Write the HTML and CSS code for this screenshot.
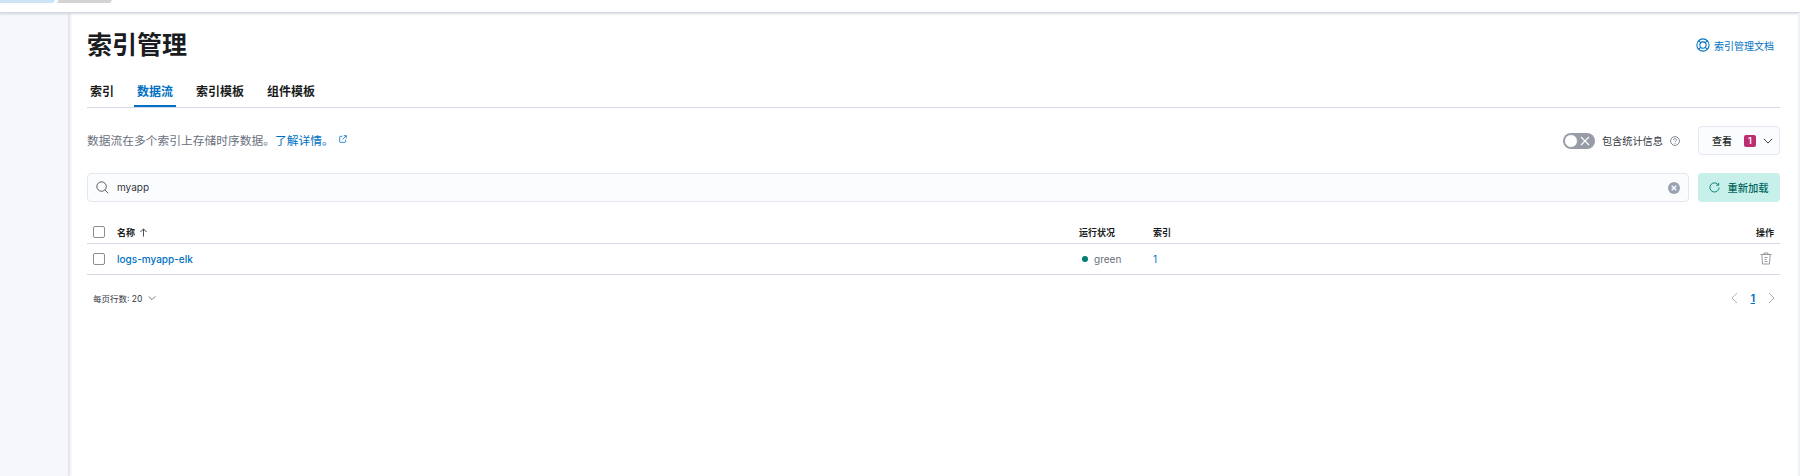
FILE: index.html
```html
<!DOCTYPE html>
<html lang="zh">
<head>
<meta charset="utf-8">
<title>索引管理</title>
<link rel="stylesheet" href="styles.css">
</head>
<body>
<div class="topbar">
  <div class="crumbs"><span class="crumb crumb-a"></span><span class="crumb crumb-b"></span></div>
</div>
<div class="shell">
  <aside class="side"></aside>
  <main class="panel">
    <header class="head">
      <h1>索引管理</h1>
      <a class="doc">
        <svg width="14" height="14" viewBox="0 0 16 16" fill="none" stroke="#0071c2" stroke-width="1.2"><circle cx="8" cy="8" r="7"/><circle cx="8" cy="8" r="3.6"/><path d="M3 3l2.4 2.4M13 3l-2.4 2.4M3 13l2.4-2.4M13 13l-2.4-2.4"/></svg>
        <span>索引管理文档</span>
      </a>
    </header>
    <nav class="tabs">
      <span class="tab">索引</span>
      <span class="tab active">数据流</span>
      <span class="tab">索引模板</span>
      <span class="tab">组件模板</span>
    </nav>
    <section class="intro">
      <p class="desc">数据流在多个索引上存储时序数据。<a class="link">了解详情。</a>
        <svg class="ext" width="8" height="8" viewBox="0 0 12 12" fill="none" stroke="#0071c2" stroke-width="1.2"><path d="M5 2H2a1 1 0 0 0-1 1v7a1 1 0 0 0 1 1h7a1 1 0 0 0 1-1V7M7 1h4v4M11 1L5.500 6.500"/></svg>
      </p>
      <div class="intro-right">
        <span class="switch"><span class="knob"></span>
          <svg width="10" height="10" viewBox="0 0 10 10" stroke="#fff" stroke-width="1.1"><path d="M1 1l8 8M9 1l-8 8"/></svg>
        </span>
        <span class="switch-label">包含统计信息</span>
        <svg class="help" width="10" height="10" viewBox="0 0 12 12" fill="none" stroke="#69707d"><circle cx="6" cy="6" r="5.300"/><path d="M4.300 4.700a1.700 1.700 0 1 1 2.500 1.500c-.6.300-.8.600-.8 1.200M6 8.500v1"/></svg>
        <button class="view"><span class="view-label">查看</span><span class="badge">1</span>
          <svg width="10" height="10" viewBox="0 0 12 12" fill="none" stroke="#1a1c21" stroke-width="1"><path d="M1 3.500l5 5 5-5"/></svg>
        </button>
      </div>
    </section>
    <section class="search-row">
      <div class="search">
        <svg width="13" height="13" viewBox="0 0 16 16" fill="none" stroke="#343741" stroke-width="1"><circle cx="6.800" cy="6.800" r="5.800"/><path d="M11 11l4 4"/></svg>
        <span class="query">myapp</span>
        <span class="clear"><svg width="6" height="6" viewBox="0 0 6 6" stroke="#fff" stroke-width="1.300"><path d="M.7.700l4.600 4.600M5.300.700L.7 5.300"/></svg></span>
      </div>
      <button class="reload">
        <svg width="11" height="11" viewBox="0 0 12 12" fill="none" stroke="#017d73" stroke-width="1"><path d="M10.300 3.400A5 5 0 1 0 11 6M10.500 1v2.600H8"/></svg>
        <span>重新加载</span>
      </button>
    </section>
    <table class="grid">
      <thead>
        <tr>
          <th class="c-check"><span class="box"></span></th>
          <th class="c-name"><span class="sort">名称
            <svg width="9" height="9" viewBox="0 0 10 10" fill="none" stroke="#343741"><path d="M5 9.500V1M1.500 4.500L5 1l3.500 3.500"/></svg></span></th>
          <th class="c-health">运行状况</th>
          <th class="c-index">索引</th>
          <th class="c-action">操作</th>
        </tr>
      </thead>
      <tbody>
        <tr>
          <td class="c-check"><span class="box"></span></td>
          <td class="c-name"><a class="link name">logs-myapp-elk</a></td>
          <td class="c-health"><span class="dot"></span><span class="status">green</span></td>
          <td class="c-index"><a class="link">1</a></td>
          <td class="c-action">
            <svg class="trash" width="12" height="13" viewBox="0 0 12 13" fill="none" stroke="#8c8f96" stroke-width=".9"><path d="M.5 2.500h11M4 2.500V1h4v1.500M1.800 2.500l.7 9.500h7l.7-9.500M4.500 5.500h3M4.500 7.500h2M4.500 9.500h3"/></svg>
          </td>
        </tr>
      </tbody>
    </table>
    <footer class="pager">
      <span class="rows">每页行数: 20
        <svg width="8" height="8" viewBox="0 0 12 12" fill="none" stroke="#343741"><path d="M1 3.500l5 5 5-5"/></svg>
      </span>
      <span class="pages">
        <svg width="7" height="12" viewBox="0 0 7 12" fill="none" stroke="#abb4c4"><path d="M6 1L1 6l5 5"/></svg>
        <a class="page-num">1</a>
        <svg width="7" height="12" viewBox="0 0 7 12" fill="none" stroke="#abb4c4"><path d="M1 1l5 5-5 5"/></svg>
      </span>
    </footer>
  </main>
</div>
</body>
</html>
```
FILE: styles.css
```css
* { box-sizing: border-box; }
html, body { margin: 0; height: 100%; }
body {
  width: 1800px;
  height: 476px;
  overflow: hidden;
  background: #fff;
  color: #1a1c21;
  font-family: Inter, "Noto Sans CJK SC", sans-serif;
  font-size: 10px;
}
.topbar {
  height: 13px;
  background: #fff;
  border-bottom: 1px solid #d3dae6;
  box-shadow: 0 1px 2px rgba(120,130,150,.3);
  position: relative;
}
.crumbs { display: flex; height: 3px; }
.crumb { display: block; height: 3px; }
.crumb-a { width: 55px; background: #cce4f5; clip-path: polygon(0 0, 100% 0, 97% 100%, 0 100%); }
.crumb-b { width: 55px; margin-left: 2px; background: #d3d3d3; clip-path: polygon(3% 0, 100% 0, 97% 100%, 0 100%); }
.shell { display: flex; height: 463px; }
.side { flex: none; width: 69px; background: #f5f7fa; border-right: 1px solid #e4e6ec; box-shadow: 1px 0 3px rgba(120,130,150,.25); }
.panel { flex: 1; min-width: 0; padding: 0 20px 0 18px; position: relative; }
.panel::after { content: ""; position: absolute; top: 0; right: 0; bottom: 0; width: 2px; background: #f1f2f5; }
.head { display: flex; justify-content: space-between; align-items: center; height: 54px; padding-top: 10px; }
h1 { margin: 0; font-size: 25px; line-height: 32px; font-weight: 700; }
.doc { display: flex; align-items: center; gap: 4px; color: #0071c2; font-size: 10px; margin-right: 6px; }
.tabs { display: flex; height: 41px; border-bottom: 1px solid #d3dae6; }
.tab { display: flex; align-items: center; height: 40px; padding: 6px 3px 0; margin-right: 17px; font-size: 12px; font-weight: 700; color: #1a1c21; }
.tab.active { color: #0071c2; box-shadow: inset 0 -2px 0 #0071c2; }
.intro { display: flex; justify-content: space-between; align-items: center; height: 65px; }
.desc { margin: 0 0 3px; font-size: 11.75px; color: #69707d; display: flex; align-items: center; }
.link { color: #0071c2; }
.ext { margin-left: 5px; }
.intro-right { display: flex; align-items: center; }
.switch { display: flex; align-items: center; justify-content: flex-end; width: 32px; height: 16px; border-radius: 8px; background: #989ca6; padding-right: 5px; position: relative; }
.knob { position: absolute; left: 1px; top: 1px; width: 14px; height: 14px; border-radius: 50%; background: #fff; border: 1px solid #989ca6; }
.switch-label { margin-left: 7px; font-size: 10.2px; color: #343741; white-space: nowrap; }
.help { margin-left: 7px; margin-right: 18px; }
.view { display: flex; align-items: center; width: 82px; height: 29px; padding: 0 6px 0 13px; background: #fbfcfd; border: 1px solid #e3e7ef; border-radius: 4px; font: inherit; font-size: 10px; font-weight: 500; color: #1a1c21; white-space: nowrap; }
.view-label { flex: none; }
.badge { display: inline-flex; flex: none; align-items: center; justify-content: center; width: 12px; height: 12px; margin-left: 12px; margin-right: 7px; background: #bd2e6f; color: #fff; border-radius: 2px; font-size: 9px; font-weight: 600; }
.search-row { display: flex; gap: 9px; height: 29px; }
.search { flex: 1; display: flex; align-items: center; background: #fbfcfd; border: 1px solid #e3e7ef; border-radius: 4px; padding: 0 8px; }
.query { margin-left: 8px; padding-bottom: 2px; font-size: 10px; color: #343741; flex: 1; }
.clear { display: flex; align-items: center; justify-content: center; width: 12px; height: 12px; border-radius: 50%; background: #98a2b3; }
.reload { display: flex; align-items: center; justify-content: center; gap: 7px; width: 82px; background: #c8f0eb; border: 0; border-radius: 4px; font: inherit; font-size: 10.3px; font-weight: 500; color: #00665e; padding: 0 0 1px; white-space: nowrap; }
.grid { width: 100%; border-collapse: separate; border-spacing: 0; table-layout: fixed; margin-top: 19px; }
.grid th { height: 23px; font-size: 9px; font-weight: 700; text-align: left; border-bottom: 1px solid #d3dae6; padding: 0; }
.grid td { height: 31px; font-size: 10px; border-bottom: 1px solid #d3dae6; padding: 0; }
.grid .c-check { width: 30px; padding-left: 6px; }
.box { display: block; width: 12px; height: 12px; border: 1px solid #8a8d93; border-radius: 2px; background: #fff; }
.grid .c-name { width: auto; }
.grid .c-health { width: 74px; }
.grid .c-index { width: 430px; }
.grid .c-action { width: 197px; text-align: right; padding-right: 6px; }
.trash { margin-right: 2px; }
.sort { display: inline-flex; align-items: center; gap: 4px; }
.name { font-weight: 500; }
.dot { display: inline-block; width: 6px; height: 6px; margin-left: 3px; border-radius: 50%; background: #017d73; vertical-align: 1px; }
.status { margin-left: 6px; color: #69707d; }
.pager { display: flex; justify-content: space-between; align-items: center; height: 46px; padding: 0 5px 0 6px; font-size: 8.5px; color: #343741; }
.rows { display: flex; align-items: center; gap: 6px; }
.pages { display: flex; align-items: center; gap: 13px; }
.page-num { color: #0071c2; font-weight: 700; font-size: 10px; text-decoration: underline; }
```
